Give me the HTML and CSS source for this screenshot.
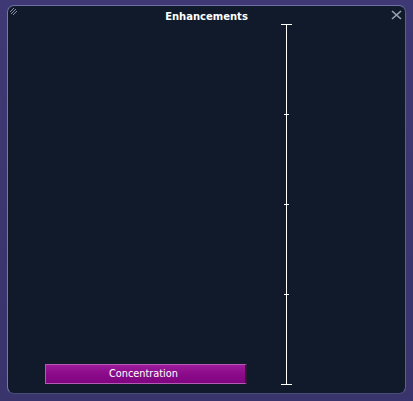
FILE: index.html
```html
<!DOCTYPE html>
<html>
<head>
<meta charset="utf-8">
<link rel="stylesheet" href="styles.css">
</head>
<body>
<div class="panel">
  <div class="grip">
    <svg width="7" height="7" viewBox="0 0 7 7"><path d="M0 4 L4 0 M1 6 L6 1 M3 7 L7 3" stroke="#8a90a8" stroke-width="1"/></svg>
  </div>
  <div class="close">
    <svg width="11" height="10" viewBox="0 0 11 10"><path d="M1 1 L10 9 M10 1 L1 9" stroke="#9aa3b0" stroke-width="1.6"/></svg>
  </div>
  <div class="title">Enhancements</div>
  <div class="main">
    <div class="left">
      <div class="button">Concentration</div>
    </div>
    <div class="scale">
      <div class="tick end"></div>
      <div class="seg"></div>
      <div class="tick"></div>
      <div class="seg"></div>
      <div class="tick"></div>
      <div class="seg"></div>
      <div class="tick"></div>
      <div class="seg"></div>
      <div class="tick end"></div>
    </div>
  </div>
</div>
</body>
</html>
```
FILE: styles.css
```css
html, body {
  margin: 0;
  padding: 0;
}
body {
  width: 413px;
  height: 401px;
  background: #3b3570;
  background-image: linear-gradient(180deg, #3e3874 0%, #3a346d 100%);
  font-family: "DejaVu Sans", Verdana, sans-serif;
  overflow: hidden;
}
.panel {
  position: relative;
  box-sizing: border-box;
  margin: 5px 0 0 7px;
  width: 399px;
  height: 389px;
  background: #111a2a;
  border: 1px solid #6a6c98;
  border-color: #6e70a0 #5c5e8c #4a4c7a #7678a8;
  border-radius: 7px;
  display: flex;
  flex-direction: column;
}
.grip {
  position: absolute;
  left: 2px;
  top: 2px;
  line-height: 0;
}
.close {
  position: absolute;
  right: 3px;
  top: 4px;
  line-height: 0;
}
.title {
  height: 17px;
  padding-top: 5px;
  box-sizing: border-box;
  text-align: center;
  color: #ffffff;
  font-weight: bold;
  font-size: 10px;
  line-height: 12px;
}
.main {
  flex: 1;
  display: flex;
  align-items: stretch;
}
.left {
  width: 273px;
  display: flex;
  flex-direction: column;
  justify-content: flex-end;
  padding-left: 37px;
  box-sizing: border-box;
  padding-bottom: 9px;
}
.button {
  width: 202px;
  height: 20px;
  box-sizing: border-box;
  background: linear-gradient(180deg, #9c1c9c 0%, #8c0c8c 45%, #800480 100%);
  border: 1px solid #b45ab4;
  border-right: 2px solid #2a1a30;
  color: #ffffff;
  font-size: 9.75px;
  line-height: 18px;
  text-align: center;
  padding-right: 4px;
}
.scale {
  width: 11px;
  margin-top: 1px;
  margin-bottom: 8px;
  display: flex;
  flex-direction: column;
  align-items: center;
}
.tick {
  width: 5px;
  height: 1px;
  background: #ffffff;
}
.tick.end {
  width: 11px;
}
.seg {
  flex: 1;
  width: 1px;
  background: #ffffff;
}
```
